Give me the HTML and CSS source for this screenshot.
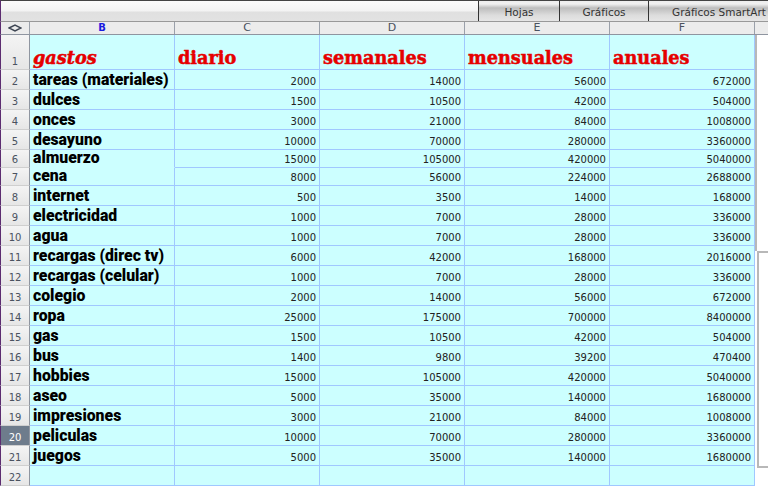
FILE: index.html
```html
<!DOCTYPE html>
<html lang="es">
  <head>
    <meta charset="UTF-8" />
    <title>gastos</title>
    <link rel="stylesheet" href="styles.css">
  </head>
  <body>
    <div class="toolbar">
      <div class="tab tab-hojas">Hojas</div>
      <div class="tab tab-graficos">Gráficos</div>
      <div class="tab tab-smart">Gráficos SmartArt</div>
    </div>
    <div class="colheads">
      <div class="corner">
        <svg width="14" height="8" viewBox="0 0 14 8"><path d="M1 4 L7 1 L13 4 L7 7 Z" fill="none" stroke="#3f4754" stroke-width="1.5"/></svg>
      </div>
      <div class="colhead active">B</div>
      <div class="colhead">C</div>
      <div class="colhead">D</div>
      <div class="colhead">E</div>
      <div class="colhead">F</div>
      <div class="colhead rest"></div>
    </div>
    <div class="sheet">
      <div class="chart chart-top"></div>
      <div class="chart chart-bottom"></div>
      <table>
        <tr class="r1"><th>1</th><td class="title first">gastos</td><td class="title">diario</td><td class="title">semanales</td><td class="title">mensuales</td><td class="title">anuales</td></tr>
        <tr><th>2</th><td class="name">tareas (materiales)</td><td>2000</td><td>14000</td><td>56000</td><td>672000</td></tr>
        <tr><th>3</th><td class="name">dulces</td><td>1500</td><td>10500</td><td>42000</td><td>504000</td></tr>
        <tr><th>4</th><td class="name">onces</td><td>3000</td><td>21000</td><td>84000</td><td>1008000</td></tr>
        <tr><th>5</th><td class="name">desayuno</td><td>10000</td><td>70000</td><td>280000</td><td>3360000</td></tr>
        <tr class="short"><th>6</th><td class="name joined">almuerzo</td><td>15000</td><td>105000</td><td>420000</td><td>5040000</td></tr>
        <tr class="short"><th>7</th><td class="name">cena</td><td>8000</td><td>56000</td><td>224000</td><td>2688000</td></tr>
        <tr><th>8</th><td class="name">internet</td><td>500</td><td>3500</td><td>14000</td><td>168000</td></tr>
        <tr><th>9</th><td class="name">electricidad</td><td>1000</td><td>7000</td><td>28000</td><td>336000</td></tr>
        <tr><th>10</th><td class="name">agua</td><td>1000</td><td>7000</td><td>28000</td><td>336000</td></tr>
        <tr><th>11</th><td class="name">recargas (direc tv)</td><td>6000</td><td>42000</td><td>168000</td><td>2016000</td></tr>
        <tr><th>12</th><td class="name">recargas (celular)</td><td>1000</td><td>7000</td><td>28000</td><td>336000</td></tr>
        <tr><th>13</th><td class="name">colegio</td><td>2000</td><td>14000</td><td>56000</td><td>672000</td></tr>
        <tr><th>14</th><td class="name">ropa</td><td>25000</td><td>175000</td><td>700000</td><td>8400000</td></tr>
        <tr><th>15</th><td class="name">gas</td><td>1500</td><td>10500</td><td>42000</td><td>504000</td></tr>
        <tr><th>16</th><td class="name">bus</td><td>1400</td><td>9800</td><td>39200</td><td>470400</td></tr>
        <tr><th>17</th><td class="name">hobbies</td><td>15000</td><td>105000</td><td>420000</td><td>5040000</td></tr>
        <tr><th>18</th><td class="name">aseo</td><td>5000</td><td>35000</td><td>140000</td><td>1680000</td></tr>
        <tr><th>19</th><td class="name">impresiones</td><td>3000</td><td>21000</td><td>84000</td><td>1008000</td></tr>
        <tr><th class="selected">20</th><td class="name">peliculas</td><td>10000</td><td>70000</td><td>280000</td><td>3360000</td></tr>
        <tr><th>21</th><td class="name">juegos</td><td>5000</td><td>35000</td><td>140000</td><td>1680000</td></tr>
        <tr><th>22</th><td class="name"></td><td></td><td></td><td></td><td></td></tr>
      </table>
    </div>
  </body>
</html>
```

FILE: styles.css
```css
html {
  background-color: white;
}
body {
  margin: 0;
  width: 768px;
  height: 486px;
  overflow: hidden;
  font-family: "DejaVu Sans", sans-serif;
}
.toolbar {
  box-sizing: border-box;
  height: 21px;
  border-top: 1px solid #444;
  border-left: 1px solid #5c2c70;
  background: linear-gradient(#fbfbfb 0, #f3f3f3 10px, #e0e0e0 11px, #e2e2e2 100%);
  display: flex;
  justify-content: flex-end;
}
.tab {
  box-sizing: border-box;
  height: 20px;
  border-left: 1px solid #333;
  background: linear-gradient(#eeeeee 0, #f0f0f0 3px, #bdbdbd 7px, #dcdcdc 14px, #e6e6e6 100%);
  font-size: 10.5px;
  line-height: 22px;
  color: #333;
  text-align: center;
}
.tab-hojas {
  width: 81px;
}
.tab-graficos {
  width: 89px;
}
.tab-smart {
  width: 120px;
  text-align: left;
  padding-left: 23px;
  white-space: nowrap;
}
.colheads {
  display: flex;
  height: 14px;
  box-sizing: border-box;
  background-color: #ececec;
  border-top: 1px solid #999;
  border-bottom: 1px solid #8f95a0;
  border-left: 1px solid #5c2c70;
}
.corner {
  box-sizing: border-box;
  width: 29px;
  border-right: 1px solid #9aa0aa;
  display: flex;
  align-items: center;
  justify-content: center;
}
.colhead {
  box-sizing: border-box;
  width: 145px;
  border-right: 1px solid #9aa0aa;
  font-size: 11px;
  line-height: 12px;
  color: #4a5260;
  text-align: center;
}
.colhead.active {
  font-size: 10px;
  font-weight: bold;
  color: #1a1ae0;
}
.colhead.rest {
  flex: 1;
  border-right: none;
}
.sheet {
  position: relative;
}
.chart {
  position: absolute;
  box-sizing: border-box;
  background-color: white;
  border-style: solid;
  border-color: #b8b8b8;
}
.chart-top {
  left: 755px;
  top: 0;
  width: 13px;
  height: 216px;
  border-width: 0 0 0 2px;
}
.chart-bottom {
  left: 757px;
  top: 216px;
  width: 11px;
  height: 217px;
  border-width: 2px 0 2px 2px;
}
table {
  position: relative;
  border-collapse: separate;
  border-spacing: 0;
  table-layout: fixed;
  width: 755px;
}
tr {
  height: 20px;
}
tr.r1 {
  height: 35px;
}
tr.short {
  height: 18px;
}
th {
  box-sizing: border-box;
  width: 30px;
  padding: 0;
  background: linear-gradient(#f4f4f4, #e6e6e6);
  border-left: 1px solid #5c2c70;
  border-right: 1px solid #8f95a0;
  border-bottom: 1px solid #cfcfcf;
  font-size: 10px;
  font-weight: normal;
  color: #4a5260;
  text-align: center;
  vertical-align: bottom;
  line-height: 15px;
}
th.selected {
  background: #6e7c8c;
  color: white;
}
td {
  box-sizing: border-box;
  width: 145px;
  padding: 0 3px 1px 0;
  background-color: #ccffff;
  border-right: 1px solid #a0c8ff;
  border-bottom: 1px solid #a0c8ff;
  font-size: 10px;
  line-height: 12px;
  color: #222;
  text-align: right;
  vertical-align: bottom;
  white-space: nowrap;
}
td.name {
  padding: 0 0 1px 3px;
  font-family: Roboto, sans-serif;
  font-size: 15.8px;
  font-weight: 900;
  line-height: 16px;
  color: black;
  text-align: left;
}
td.joined {
  border-bottom-color: #ccffff;
}
td.title {
  padding: 0 0 0 3px;
  font-family: "DejaVu Serif", serif;
  font-size: 17.7px;
  font-weight: bold;
  line-height: 22px;
  color: #e60000;
  text-align: left;
  -webkit-text-stroke: 0.5px #e60000;
}
td.first {
  font-style: italic;
}
```
